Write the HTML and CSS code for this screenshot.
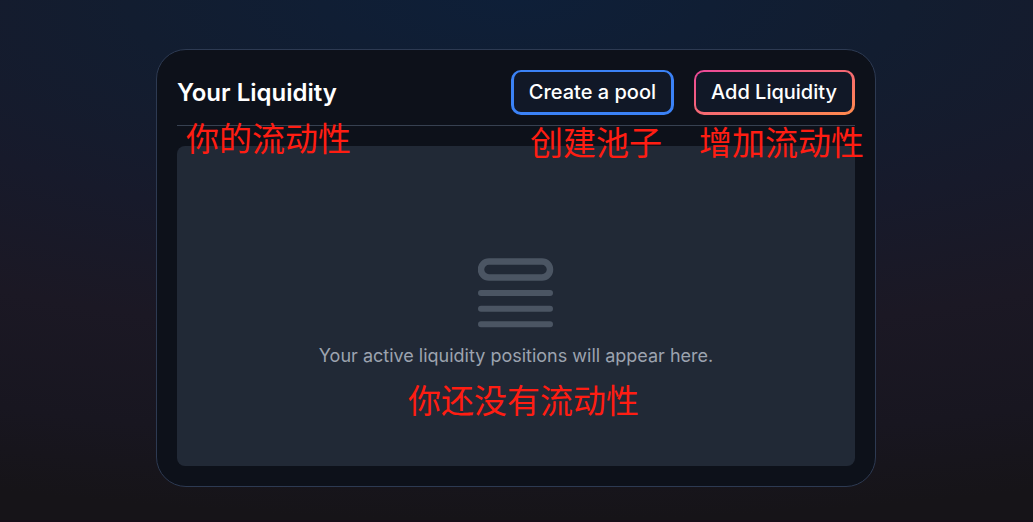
FILE: index.html
```html
<!DOCTYPE html>
<html lang="en">
<head>
<meta charset="utf-8">
<meta name="viewport" content="width=device-width, initial-scale=1">
<title>Your Liquidity</title>
<link rel="stylesheet" href="styles.css">
</head>
<body>
<main class="page">
  <section class="card">
    <header class="card-header">
      <h1 class="title">Your Liquidity</h1>
      <div class="actions">
        <button class="btn btn-create" type="button">Create a pool</button>
        <button class="btn btn-add" type="button">Add Liquidity</button>
      </div>
    </header>
    <div class="empty">
      <svg class="empty-icon" viewBox="0 0 76 70" fill="none" stroke="currentColor" stroke-width="6" stroke-linecap="round" aria-hidden="true">
        <rect x="3" y="3.5" width="69" height="16" rx="8" stroke-width="6.5"/>
        <path d="M3 35h69M3 50.7h69M3 66.3h69"/>
      </svg>
      <p class="empty-text">Your active liquidity positions will appear here.</p>
    </div>
    <span class="note note-title" lang="zh">你的流动性</span>
    <span class="note note-create" lang="zh">创建池子</span>
    <span class="note note-add" lang="zh">增加流动性</span>
    <span class="note note-empty" lang="zh">你还没有流动性</span>
  </section>
</main>
</body>
</html>
```
FILE: styles.css
```css
* {
  box-sizing: border-box;
}

body {
  margin: 0;
  font-family: Inter, "Noto Sans CJK SC", sans-serif;
  color: #fff;
  background: #161418;
}

.page {
  display: flex;
  justify-content: center;
  align-items: flex-start;
  min-height: 100vh;
  padding: 49px 21px 33px 20px;
  border-bottom: 2px solid #160e18;
  background: radial-gradient(150% 100% at 50% 0, #0e1f38 0%, #121d30 25%, #171a2b 45%, #1b1824 65%, #181620 85%, #161418 100%);
}

.card {
  position: relative;
  width: 100%;
  max-width: 720px;
  padding: 20px;
  border: 1px solid #2d3a52;
  border-radius: 30px;
  background: #0d111a;
}

.card-header {
  display: flex;
  flex-wrap: wrap;
  justify-content: space-between;
  align-items: center;
  gap: 20px;
  padding-bottom: 10px;
  border-bottom: 1px solid #374151;
}

.title {
  margin: 0;
  font-size: 24px;
  line-height: 32px;
  font-weight: 600;
}

.actions {
  display: flex;
  gap: 20px;
}

.btn {
  padding: 8px 15px;
  border: 3px solid transparent;
  border-top-width: 2px;
  border-radius: 10px;
  font-family: inherit;
  font-size: 20px;
  line-height: 24px;
  font-weight: 500;
  color: #fff;
  cursor: pointer;
}

.btn-create {
  border-color: #3b82f6;
  background: #111827;
}

.btn-add {
  border-left-width: 2px;
  background:
    linear-gradient(#111827, #111827) padding-box,
    linear-gradient(to bottom right, #ec4899, #ff8a4c) border-box;
}

.empty {
  display: flex;
  flex-direction: column;
  align-items: center;
  justify-content: center;
  gap: 14px;
  min-height: 320px;
  margin-top: 20px;
  padding: 36px 20px 20px;
  border-radius: 8px;
  background: #212936;
}

.empty-icon {
  width: 76px;
  height: 70px;
  color: #4b5563;
}

.empty-text {
  margin: 0;
  font-size: 18px;
  line-height: 28px;
  color: #9ca3af;
}

.note {
  position: absolute;
  font-family: "Noto Sans CJK SC", sans-serif;
  font-size: 33px;
  line-height: 40px;
  font-weight: 400;
  white-space: nowrap;
  color: #ff1d12;
  pointer-events: none;
}

.note-title {
  top: 67px;
  left: 29px;
}

.note-create {
  top: 71px;
  right: 213px;
}

.note-add {
  top: 71px;
  right: 11px;
}

.note-empty {
  bottom: 67px;
  left: 50%;
  margin-left: -108px;
}
```
